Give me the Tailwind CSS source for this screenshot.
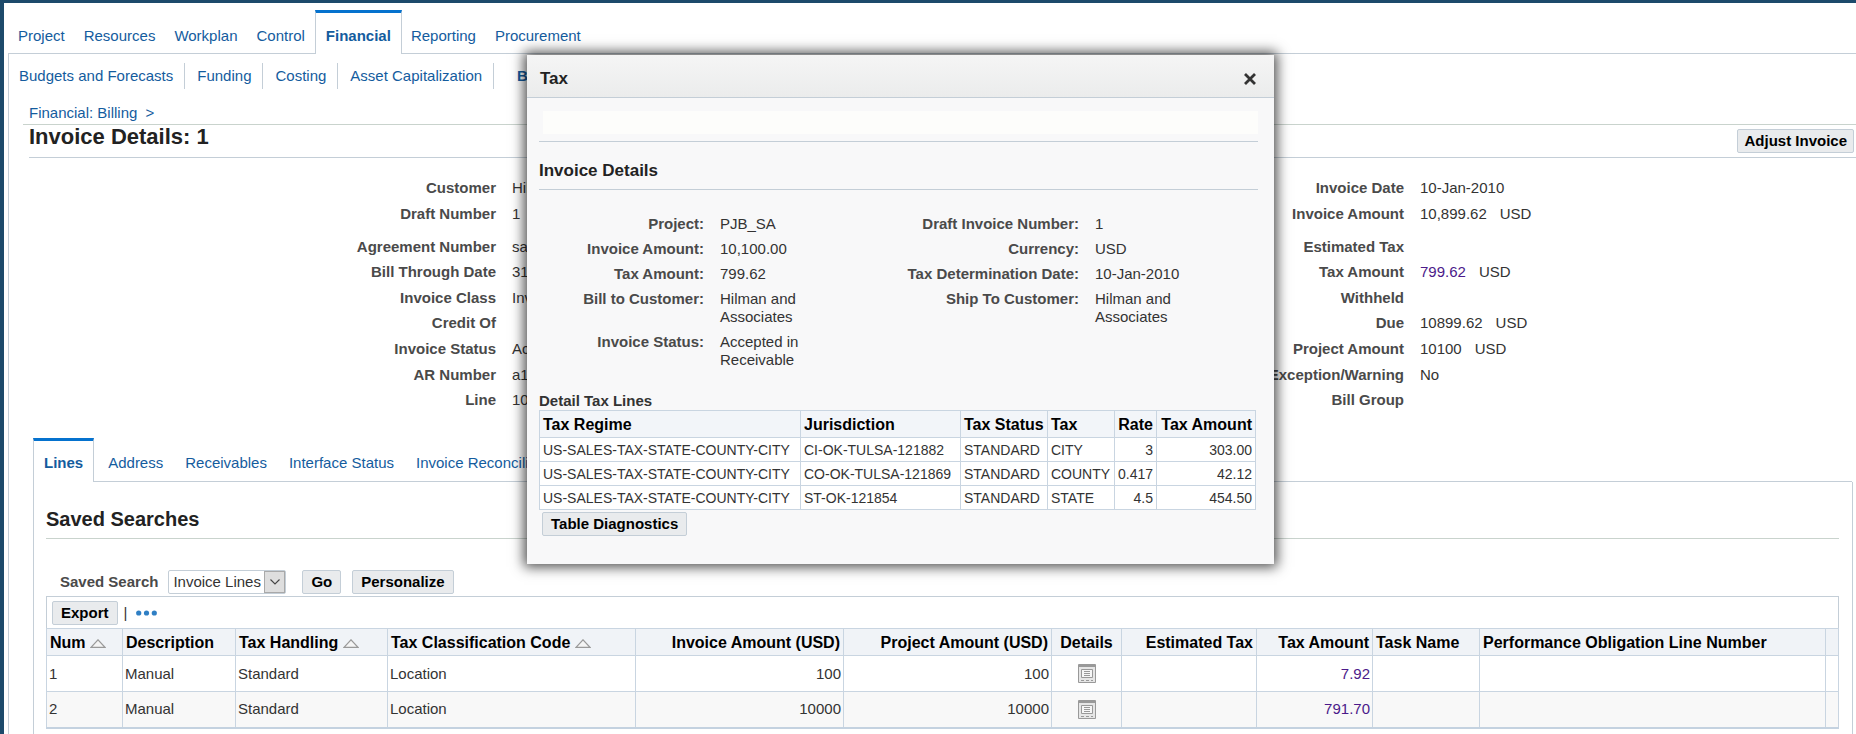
<!DOCTYPE html>
<html lang="en">
<head>
    <meta charset="UTF-8">
    <meta name="viewport" content="width=device-width, initial-scale=1.0">
    <title>Invoice Details: 1</title>
    <script src="https://cdn.jsdelivr.net/npm/@tailwindcss/browser@4"></script>
</head>
<body class="relative min-h-screen flex flex-col border-t-3 border-l-4 border-[#1d4a6b] bg-white font-['Liberation_Sans',Arial,sans-serif] text-[15px] leading-[18px] text-[#333333]">
    <!-- Main tabs -->
    <nav class="ml-1 mt-[7px] flex h-11 text-[#145c9e]" aria-label="Main">
        <div class="flex grow-0 gap-[19px] border-b border-[#c4ced7] pl-[10px] pr-[10px] pt-[17px]">
            <a href="#">Project</a>
            <a href="#">Resources</a>
            <a href="#">Workplan</a>
            <a href="#">Control</a>
        </div>
        <a href="#" class="border-x border-t-3 border-x-[#c4ced7] border-t-[#0572ce] px-[10px] pt-[14px] font-bold">Financial</a>
        <div class="flex grow gap-[19px] border-b border-[#c4ced7] pl-[9px] pt-[17px]">
            <a href="#">Reporting</a>
            <a href="#">Procurement</a>
        </div>
    </nav>

    <main class="ml-1 flex grow flex-col border-l border-[#c4ced7]">
        <!-- Sub tabs -->
        <nav class="mt-[9px] flex text-[#145c9e] [&>a]:border-r [&>a]:border-[#c4ced7] [&>a]:py-1 [&>a]:pr-[11px] [&>a]:pl-3" aria-label="Financial">
            <a href="#" class="-ml-[2px]">Budgets and Forecasts</a>
            <a href="#">Funding</a>
            <a href="#">Costing</a>
            <a href="#">Asset Capitalization</a>
            <a href="#" class="ml-[11px] border-none font-bold">Billing</a>
        </nav>

        <div class="mt-[15px] ml-[14px] border-b border-[#c9d3cd] pl-[6px] pb-[2px] text-[#145c9e]">
            <a href="#">Financial: Billing</a>
            <span class="ml-1">&gt;</span>
        </div>
        <header class="ml-5 flex h-[33px] items-start justify-between border-b border-[#c4ced7] pr-[2px]">
            <h1 class="text-[22px] leading-6 font-bold text-[#222222]">Invoice Details: 1</h1>
            <button class="mt-1 h-6 rounded-xs border border-[#c4ced7] bg-[#e9ebed] px-[6px] font-bold leading-5 text-black">Adjust Invoice</button>
        </header>

        <!-- Invoice summary -->
        <div class="mt-[17px] grid grid-cols-[908fr_939fr] [&_dl]:grid [&_dl]:auto-rows-fr [&_dl>div]:flex [&_dl>div]:items-center [&_dl>div]:gap-4 [&_dt]:text-right [&_dt]:font-bold [&_dt]:text-[#4a4a4a] [&_dt]:whitespace-nowrap">
            <div class="[&_dt]:w-[487px]">
                <dl class="h-[52px]">
                    <div><dt>Customer</dt><dd>Hilman and Associates</dd></div>
                    <div><dt>Draft Number</dt><dd>1</dd></div>
                </dl>
                <dl class="mt-[7px] h-[179px]">
                    <div><dt>Agreement Number</dt><dd>sa</dd></div>
                    <div><dt>Bill Through Date</dt><dd>31</dd></div>
                    <div><dt>Invoice Class</dt><dd>Inv</dd></div>
                    <div><dt>Credit Of</dt><dd></dd></div>
                    <div><dt>Invoice Status</dt><dd>Accepted</dd></div>
                    <div><dt>AR Number</dt><dd>a1</dd></div>
                    <div><dt>Line</dt><dd>10</dd></div>
                </dl>
            </div>
            <div class="[&_dt]:w-[487px]">
                <dl class="h-[52px]">
                    <div><dt>Invoice Date</dt><dd>10-Jan-2010</dd></div>
                    <div><dt>Invoice Amount</dt><dd>10,899.62<span class="ml-[13px]">USD</span></dd></div>
                </dl>
                <dl class="mt-[7px] h-[179px]">
                    <div><dt>Estimated Tax</dt><dd></dd></div>
                    <div><dt>Tax Amount</dt><dd><a href="#" class="text-[#4b1a8a]">799.62</a><span class="ml-[13px]">USD</span></dd></div>
                    <div><dt>Withheld</dt><dd></dd></div>
                    <div><dt>Due</dt><dd>10899.62<span class="ml-[13px]">USD</span></dd></div>
                    <div><dt>Project Amount</dt><dd>10100<span class="ml-[13px]">USD</span></dd></div>
                    <div><dt>Exception/Warning</dt><dd>No</dd></div>
                    <div><dt>Bill Group</dt><dd></dd></div>
                </dl>
            </div>
        </div>

        <!-- Detail tabs -->
        <nav class="mt-[25px] mr-1 ml-6 flex h-11 text-[#145c9e]" aria-label="Invoice">
            <a href="#" class="border-x border-t-3 border-x-[#c4ced7] border-t-[#0572ce] px-[10px] pt-[13px] font-bold">Lines</a>
            <div class="flex grow gap-[22px] border-b border-[#c4ced7] pl-[14px] pt-4">
                <a href="#">Address</a>
                <a href="#">Receivables</a>
                <a href="#">Interface Status</a>
                <a href="#">Invoice Reconciliation</a>
            </div>
        </nav>
        <section class="mr-[3px] ml-6 grow border-x border-[#c4ced7] pr-[13px] pl-3">
            <h2 class="border-b border-[#c9d3cd] pt-[25px] pb-[7px] text-[20px] leading-6 font-bold text-[#222222]">Saved Searches</h2>
            <form class="mt-[31px] ml-[14px] flex h-6 items-center">
                <label for="saved" class="mr-[10px] font-bold text-[#4a4a4a]">Saved Search</label>
                <span class="relative flex">
                    <select id="saved" class="h-6 w-[118px] appearance-none rounded-xs border border-[#c4ced7] bg-white pl-1 text-[15px] leading-5">
                        <option>Invoice Lines</option>
                    </select>
                    <span class="pointer-events-none absolute top-px right-px flex h-[22px] w-[21px] items-center justify-center border border-[#a9a9a9] bg-[#dedede]">
                        <svg class="h-[6px] w-[10px]" viewBox="0 0 10 6" fill="none" stroke="#444" stroke-width="1.1"><path d="M.5.5 5 5 9.500.500"/></svg>
                    </span>
                </span>
                <button type="button" class="ml-4 h-6 rounded-xs border border-[#c4ced7] bg-[#e9ebed] px-2 font-bold leading-5 text-black">Go</button>
                <button type="button" class="ml-[11px] h-6 rounded-xs border border-[#c4ced7] bg-[#e9ebed] px-2 font-bold leading-5 text-black">Personalize</button>
            </form>

            <div class="mt-[2px] flex h-8 items-center border-x border-t border-[#c4ced7] pl-[5px]">
                <button class="h-6 rounded-xs border border-[#c4ced7] bg-[#e9ebed] px-2 font-bold leading-5 text-black">Export</button>
                <span class="ml-[6px]">|</span>
                <button class="ml-[9px]" aria-label="More">
                    <svg class="h-[6px] w-[21px]" viewBox="0 0 21 6" fill="#2f7fc4"><circle cx="2.700" cy="3" r="2.600"/><circle cx="10.500" cy="3" r="2.600"/><circle cx="18.300" cy="3" r="2.600"/></svg>
                </button>
            </div>
            <table class="w-full table-fixed border-collapse border-b-2 border-[#c4d2e0] [&_td]:border [&_td]:border-[#c9d5e1] [&_td]:px-[2px] [&_th]:border [&_th]:border-[#c9d5e1] [&_th]:px-[3px] [&_th]:pt-[2px] [&_th]:text-[16px] [&_th]:font-bold [&_th]:whitespace-nowrap [&_th]:text-black">
                <colgroup>
                    <col class="w-[76px]"><col class="w-[113px]"><col class="w-[152px]"><col class="w-[248px]"><col class="w-[208px]"><col class="w-[208px]"><col class="w-[70px]"><col class="w-[135px]"><col class="w-[116px]"><col class="w-[107px]"><col><col class="w-[13px]">
                </colgroup>
                <thead>
                    <tr class="h-[27px] bg-[#f0f3f7] text-left">
                        <th>Num <svg class="inline h-[9px] w-4 align-baseline" viewBox="0 0 16 9" fill="#f4f4f4" stroke="#999" stroke-width="1.200"><path d="M1 8.400 8 .8l7 7.600z"/></svg></th>
                        <th>Description</th>
                        <th>Tax Handling <svg class="inline h-[9px] w-4 align-baseline" viewBox="0 0 16 9" fill="#f4f4f4" stroke="#999" stroke-width="1.200"><path d="M1 8.400 8 .8l7 7.600z"/></svg></th>
                        <th>Tax Classification Code <svg class="inline h-[9px] w-4 align-baseline" viewBox="0 0 16 9" fill="#f4f4f4" stroke="#999" stroke-width="1.200"><path d="M1 8.400 8 .8l7 7.600z"/></svg></th>
                        <th class="text-right">Invoice Amount (USD)</th>
                        <th class="text-right">Project Amount (USD)</th>
                        <th class="text-center">Details</th>
                        <th class="text-right">Estimated Tax</th>
                        <th class="text-right">Tax Amount</th>
                        <th>Task Name</th>
                        <th>Performance Obligation Line Number</th>
                        <th></th>
                    </tr>
                </thead>
                <tbody>
                    <tr class="h-9">
                        <td>1</td>
                        <td>Manual</td>
                        <td>Standard</td>
                        <td>Location</td>
                        <td class="text-right">100</td>
                        <td class="text-right">100</td>
                        <td class="text-center">
                            <button class="align-middle" aria-label="Details">
                                <svg class="h-[19px] w-[18px]" viewBox="0 0 18 19" fill="none" stroke="#999"><path d="M.5.5h17v18H.5z" fill="#e6e6e6"/><path d="M1 2h16" stroke-width="2"/><path d="M3.500 5.500h11v8h-11z" fill="#f6f6f6"/><path d="M6 7.500h6M6 9.500h6M6 11.500h6M3 16.500h3M8 16.500h3M13 16.500h2"/></svg>
                            </button>
                        </td>
                        <td></td>
                        <td class="text-right"><a href="#" class="text-[#4b1a8a]">7.92</a></td>
                        <td></td>
                        <td></td>
                        <td></td>
                    </tr>
                    <tr class="h-9 bg-[#f8f8f8]">
                        <td>2</td>
                        <td>Manual</td>
                        <td>Standard</td>
                        <td>Location</td>
                        <td class="text-right">10000</td>
                        <td class="text-right">10000</td>
                        <td class="text-center">
                            <button class="align-middle" aria-label="Details">
                                <svg class="h-[19px] w-[18px]" viewBox="0 0 18 19" fill="none" stroke="#999"><path d="M.5.5h17v18H.5z" fill="#e6e6e6"/><path d="M1 2h16" stroke-width="2"/><path d="M3.500 5.500h11v8h-11z" fill="#f6f6f6"/><path d="M6 7.500h6M6 9.500h6M6 11.500h6M3 16.500h3M8 16.500h3M13 16.500h2"/></svg>
                            </button>
                        </td>
                        <td></td>
                        <td class="text-right"><a href="#" class="text-[#4b1a8a]">791.70</a></td>
                        <td></td>
                        <td></td>
                        <td></td>
                    </tr>
                </tbody>
            </table>
        </section>
    </main>

    <!-- Tax dialog -->
    <div role="dialog" aria-labelledby="dialog-title" class="absolute top-[52px] left-[523px] w-[747px] bg-[#f8f8f9] pb-7 shadow-[0_0_12px_3px_rgba(0,0,0,0.7)]">
        <div class="flex h-[43px] items-center justify-between border-b border-[#c4ced7] bg-linear-to-b from-[#f5f5f5] to-[#ebecec] pt-[6px] pr-[18px] pl-[13px]">
            <h2 id="dialog-title" class="text-[17px] font-bold text-[#222222]">Tax</h2>
            <button aria-label="Close">
                <svg class="h-3 w-3" viewBox="0 0 12 12" stroke="#333" stroke-width="2.800"><path d="M1 1l10 10M11 1 1 11"/></svg>
            </button>
        </div>
        <div class="pr-4 pl-3">
            <div class="border-b border-[#c4ced7] pt-[13px] pb-[7px] pl-1">
                <div class="h-[23px] bg-[#fdfdfb]"></div>
            </div>
            <h3 class="border-b border-[#c4ced7] pt-[19px] pb-2 text-[17px] leading-5 font-bold text-[#222222]">Invoice Details</h3>
            <div class="mt-[25px] flex [&_dd]:w-24 [&_dl]:flex [&_dl]:flex-col [&_dl]:gap-[7px] [&_dl>div]:flex [&_dl>div]:gap-4 [&_dt]:text-right [&_dt]:font-bold [&_dt]:text-[#4a4a4a]">
                <dl class="[&_dt]:w-[165px]">
                    <div><dt>Project:</dt><dd>PJB_SA</dd></div>
                    <div><dt>Invoice Amount:</dt><dd>10,100.00</dd></div>
                    <div><dt>Tax Amount:</dt><dd>799.62</dd></div>
                    <div><dt>Bill to Customer:</dt><dd>Hilman and Associates</dd></div>
                    <div><dt>Invoice Status:</dt><dd>Accepted in Receivable</dd></div>
                </dl>
                <dl class="[&_dt]:w-[263px]">
                    <div><dt>Draft Invoice Number:</dt><dd>1</dd></div>
                    <div><dt>Currency:</dt><dd>USD</dd></div>
                    <div><dt>Tax Determination Date:</dt><dd>10-Jan-2010</dd></div>
                    <div><dt>Ship To Customer:</dt><dd>Hilman and Associates</dd></div>
                </dl>
            </div>
            <table class="mt-[23px] w-[717px] table-fixed border-collapse text-[15px] [&_td]:border [&_td]:border-[#c9d5e1] [&_td]:bg-white [&_td]:px-[3px] [&_td]:text-[14px] [&_td]:whitespace-nowrap [&_th]:border [&_th]:border-[#c9d5e1] [&_th]:px-[3px] [&_th]:pt-[2px] [&_th]:text-[16px] [&_th]:font-bold [&_th]:whitespace-nowrap [&_th]:text-black">
                <caption class="text-left font-bold">Detail Tax Lines</caption>
                <colgroup>
                    <col class="w-[261px]"><col class="w-[160px]"><col class="w-[87px]"><col class="w-[67px]"><col class="w-[42px]"><col>
                </colgroup>
                <thead>
                    <tr class="h-[27px] bg-[#f2f5f9] text-left">
                        <th>Tax Regime</th>
                        <th>Jurisdiction</th>
                        <th>Tax Status</th>
                        <th>Tax</th>
                        <th class="text-right">Rate</th>
                        <th class="text-right">Tax Amount</th>
                    </tr>
                </thead>
                <tbody>
                    <tr class="h-6">
                        <td>US-SALES-TAX-STATE-COUNTY-CITY</td>
                        <td>CI-OK-TULSA-121882</td>
                        <td>STANDARD</td>
                        <td>CITY</td>
                        <td class="text-right">3</td>
                        <td class="text-right">303.00</td>
                    </tr>
                    <tr class="h-6">
                        <td>US-SALES-TAX-STATE-COUNTY-CITY</td>
                        <td>CO-OK-TULSA-121869</td>
                        <td>STANDARD</td>
                        <td>COUNTY</td>
                        <td class="text-right">0.417</td>
                        <td class="text-right">42.12</td>
                    </tr>
                    <tr class="h-6">
                        <td>US-SALES-TAX-STATE-COUNTY-CITY</td>
                        <td>ST-OK-121854</td>
                        <td>STANDARD</td>
                        <td>STATE</td>
                        <td class="text-right">4.5</td>
                        <td class="text-right">454.50</td>
                    </tr>
                </tbody>
            </table>
            <button class="mt-[2px] ml-[3px] h-6 rounded-xs border border-[#c4ced7] bg-[#e9ebed] px-2 font-bold leading-5 text-black">Table Diagnostics</button>
        </div>
    </div>
</body>
</html>
